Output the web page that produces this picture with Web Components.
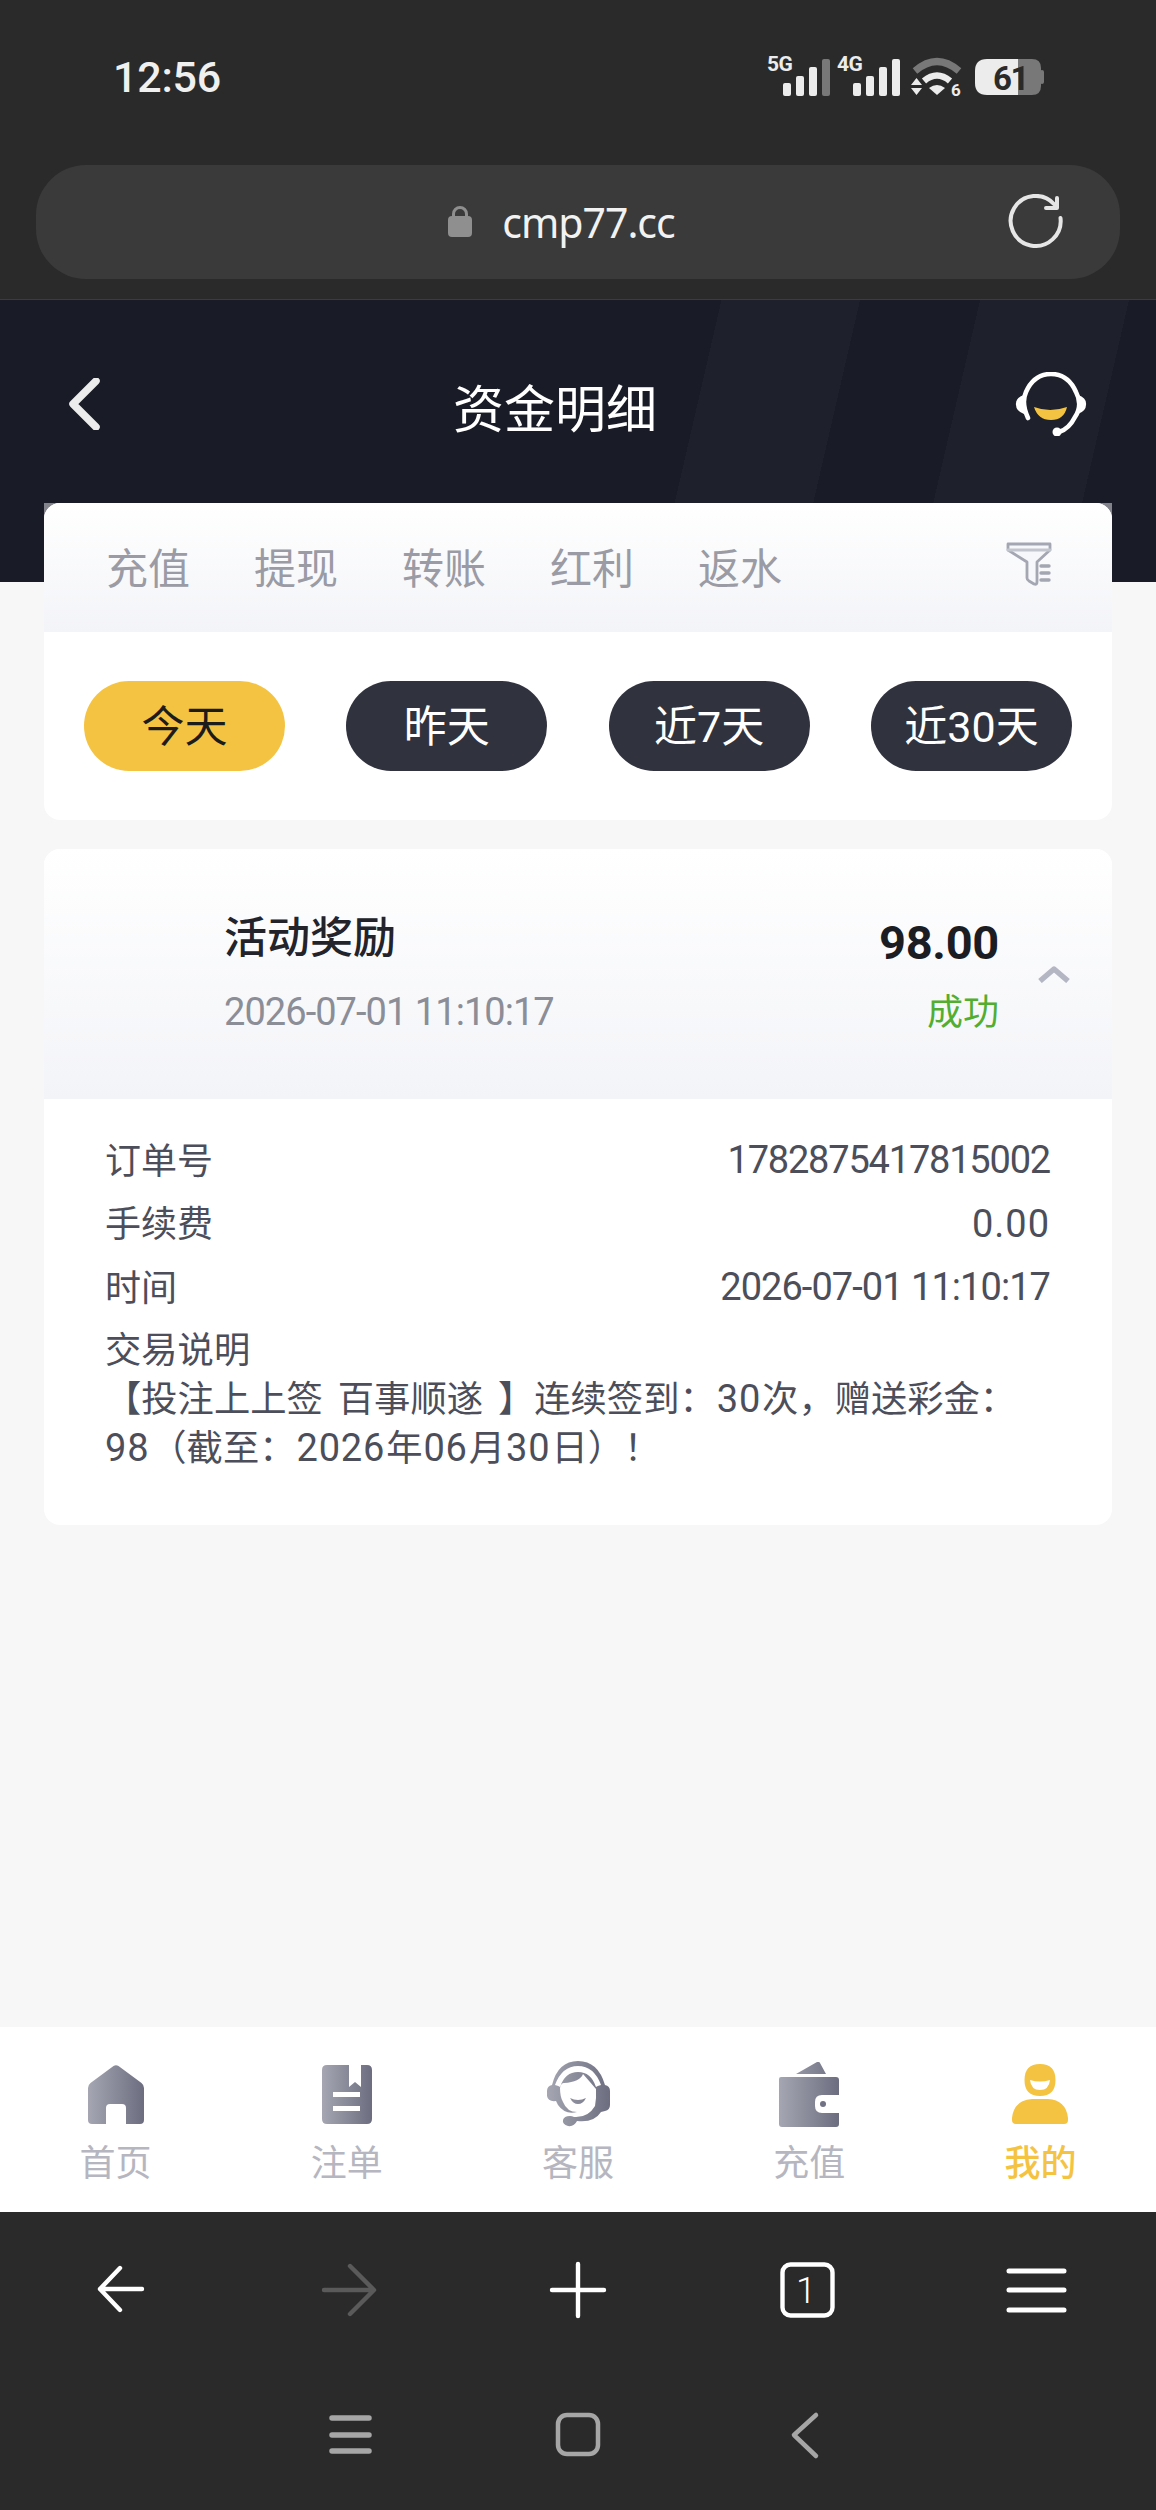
<!DOCTYPE html>
<html lang="zh-CN"><head><meta charset="utf-8"><title>资金明细</title>
<style>
html,body{margin:0;padding:0;background:#f7f7f7}
body{width:1156px;height:2510px;overflow:hidden;font-family:"Noto Sans CJK SC","Noto Sans",sans-serif}
</style></head>
<body>
<x-app></x-app>
<script>
function def(name, css, html){
  customElements.define(name, class extends HTMLElement{
    constructor(){super();const r=this.attachShadow({mode:'open'});r.innerHTML='<style>'+css+'</style>'+html;}
  });
}
const F='"Noto Sans CJK SC","Noto Sans",sans-serif';

def('x-status-bar',`
:host{display:flex;justify-content:space-between;align-items:flex-start;height:165px;box-sizing:border-box;padding:55px 108px 0 113px;color:#f0f0f0}
.t{font:500 43px/46px Roboto,${F};letter-spacing:-.2px;margin-top:-1px}
svg{display:block;margin-top:-15px}
text{font-family:Roboto,sans-serif;font-weight:700}
`,`<div class="t">12:56</div>
<svg width="284" height="70" viewBox="765 40 284 70">
 <g fill="#ececec">
  <text x="768" y="71" font-size="21" letter-spacing="-.6">5G</text>
  <rect x="784" y="83" width="8" height="13" rx="2"/><rect x="797" y="76" width="8" height="20" rx="2"/><rect x="810" y="67" width="8" height="29" rx="2"/>
  <rect x="823" y="59" width="8" height="37" rx="2" fill="#787878"/>
  <text x="838" y="71" font-size="21" letter-spacing="-.6">4G</text>
  <rect x="854" y="83" width="8" height="13" rx="2"/><rect x="867" y="76" width="8" height="20" rx="2"/><rect x="880" y="67" width="8" height="29" rx="2"/><rect x="893" y="59" width="8" height="37" rx="2"/>
  <path d="M916 71Q938 52 960 71" fill="none" stroke="#787878" stroke-width="7"/>
  <path d="M925 81Q938 70 951 81" fill="none" stroke="#ececec" stroke-width="6.500"/>
  <path d="M930 88Q938 82 946 88L938 95Z"/>
  <path d="M912 85l5.500-7 5.500 7zM912 88h11l-5.500 7z"/>
  <text x="952" y="96" font-size="17">6</text>
  <path d="M1019 59h14q9 0 9 9v18q0 9-9 9h-14z" fill="#787878"/><rect x="1041" y="70" width="4" height="14" rx="2" fill="#787878"/>
  <path d="M1019 59h-31q-12 0-12 12v12q0 12 12 12h31z"/>
  <text x="994" y="90" font-size="33" fill="#2a2a2a" letter-spacing="-1.500">61</text>
 </g></svg>`);

def('x-url-bar',`
:host{display:flex;align-items:center;justify-content:center;position:relative;height:114px;margin:0 36px;padding-right:33px;background:#3a3a3a;border-radius:50px;color:#f2f2f2}
.u{font:400 41px/50px "Noto Sans",sans-serif;letter-spacing:-1px;margin:0 0 0 30px}
.lock{display:block;margin:-2px 0 0 0}
.r{position:absolute;right:56px;top:29px}
`,`<svg class="lock" width="24" height="32" viewBox="0 0 24 32"><path d="M5.500 13V9a6.500 6.500 0 0113 0v4" fill="none" stroke="#8f8f8f" stroke-width="3"/><rect y="11" width="24" height="21" rx="4" fill="#8f8f8f"/></svg>
<div class="u">cmp77.cc</div>
<svg class="r" width="56" height="56" viewBox="0 0 56 56" fill="none" stroke="#e6e6e6" stroke-width="4" stroke-linecap="round" stroke-linejoin="round"><path d="M46.500 10.500A25 25 0 1052.500 24"/><path d="M38 14H49V4"/></svg>`);

def('x-browser-top',`
:host{display:block;height:300px;background:#2a2a2a;box-sizing:border-box;border-bottom:1px solid #3c3c3c}
`,`<x-status-bar></x-status-bar><x-url-bar></x-url-bar>`);

def('x-page-head',`
:host{display:flex;align-items:center;justify-content:space-between;height:203px;box-sizing:border-box;padding:4px 69px 0;color:#fff}
h1{margin:0 0 0 -6px;font:400 51px/72px ${F};padding-top:4px}
svg{display:block}
`,`<svg width="32" height="52" viewBox="0 0 32 52" fill="none"><path d="M27 3L4 26l23 23" stroke="#ececec" stroke-width="7.500" stroke-linecap="round" stroke-linejoin="round"/></svg>
<h1>资金明细</h1>
<svg width="72" height="64" viewBox="1016 377 72 64"><g fill="none" stroke="#fff" stroke-width="4.600" stroke-linecap="round"><path d="M1029 423Q1022 408 1027 397Q1035 379 1052 379Q1069 379 1077 397Q1084 410 1076 422Q1070 434 1060 437"/></g>
<path d="M1025 400q-9 3-8 10 0 6 8 9zM1079 400q9 3 8 10 0 6-8 9z" fill="#fff"/><circle cx="1058" cy="437" r="4.500" fill="#fff"/><path d="M1035 412q16 6 33 0q-3 13-16 13t-17-13z" fill="#f5c342"/></svg>`);

def('x-pill',`
:host{display:flex;align-items:center;justify-content:center;width:201px;height:90px;border-radius:45px;background:#30323e;color:#fff;font:400 43px/60px Roboto,${F}}
:host([active]){background:#f5c342;color:#1c1c1c}
span{margin-top:2px}
`,`<span><slot></slot></span>`);

def('x-filter-card',`
:host{display:block;margin:0 44px;background:linear-gradient(#83848b 0 16px,transparent 16px)}
.c{background:#fff;border-radius:16px;height:317px;overflow:hidden}
.h{height:129px;background:linear-gradient(#fff,#f3f4f8);display:flex;align-items:center;padding:0 60px 0 62px;gap:64px;color:#9a9ba4;font:400 42px/60px ${F}}
.h span{margin-top:-4px}
.h svg{margin:-7px 0 0 auto;display:block}
.p{display:flex;justify-content:space-between;padding:49px 40px 0}
`,`<div class="c"><div class="h"><span>充值</span><span>提现</span><span>转账</span><span>红利</span><span>返水</span>
<svg width="46" height="44" viewBox="0 0 46 44" fill="none" stroke="#a4a6b2" stroke-width="2.800" stroke-linejoin="round" stroke-linecap="round"><path d="M2 2h42v6L31 20v20q0 3-3 2l-5-3q-2-1-2-3V20L2 8z" fill="#f6f7fa"/><path d="M2 8h42" stroke="#c3c5ce"/><path d="M35 24h8M35 31h8M35 38h8" stroke-width="3.400"/></svg></div>
<div class="p"><x-pill active>今天</x-pill><x-pill>昨天</x-pill><x-pill>近7天</x-pill><x-pill>近30天</x-pill></div></div>`);

def('x-row',`
:host{display:flex;justify-content:space-between;height:63.500px;align-items:center;font:400 36px/50px ${F};color:#4c4e5a}
::slotted([slot=v]){margin-top:5px;font:38px/50px Roboto,sans-serif}
`,`<slot name="k"></slot><slot name="v"></slot>`);

def('x-record',`
:host{display:block;margin:29px 44px 0;background:#fff;border-radius:16px;overflow:hidden;height:676px}
.h{height:250px;box-sizing:border-box;background:linear-gradient(#fff,#f3f4f8);display:grid;grid-template-columns:1fr auto 72px;padding:0 41px 0 180px}
.n{font:500 43px/60px ${F};color:#23242b;margin-top:55px}
.d{font:400 38px/50px Roboto,sans-serif;letter-spacing:-.95px;color:#8b8d97;margin-top:23px}
.a{font:700 47px/60px Roboto,sans-serif;letter-spacing:-.3px;color:#1c1d22;text-align:right;margin-top:64px}
.s{font:400 36px/50px ${F};color:#52ae30;text-align:right;margin-top:11px}
svg{display:block;margin:116px 0 0 38px}
.b{padding:27px 62px 0 61px}
.m{font:400 36.300px/48px Roboto,${F};color:#4c4e5a;width:960px;padding-top:10px;word-spacing:6px}
.num{font-family:Roboto,sans-serif;font-size:38px;letter-spacing:.8px;margin:0 1px}
.f{margin-left:0}
`,`<div class="h"><div><div class="n">活动奖励</div><div class="d">2026-07-01 11:10:17</div></div>
<div><div class="a">98.00</div><div class="s">成功</div></div>
<svg width="34" height="18" viewBox="0 0 34 18" fill="none"><path d="M3 16L17 4l14 12" stroke="#b4b6c4" stroke-width="5.500" stroke-linejoin="round"/></svg></div>
<div class="b">
<x-row><span slot="k">订单号</span><span slot="v" style="letter-spacing:-1.2px">1782875417815002</span></x-row>
<x-row><span slot="k">手续费</span><span slot="v" style="letter-spacing:1px">0.00</span></x-row>
<x-row><span slot="k">时间</span><span slot="v" style="letter-spacing:-.95px">2026-07-01 11:10:17</span></x-row>
<div class="m">交易说明<br>&#x3010;投注上上签 百事顺遂 &#x3011;连续签到&#xFF1A;<span class="num">30</span>次&#xFF0C;赠送彩金&#xFF1A;<br><span class="num f">98</span>&#xFF08;截至&#xFF1A;<span class="num">2026</span>年<span class="num">06</span>月<span class="num">30</span>日&#xFF09;&#xFF01;</div>
</div>`);

const G=(id)=>`<defs><linearGradient id="${id}"><stop offset="0" stop-color="#a5a6b2"/><stop offset="1" stop-color="#6c6e80"/></linearGradient></defs>`;
def('x-tab',`
:host{display:flex;flex-direction:column;align-items:center;color:#b5b6c0;font:400 36px/50px ${F}}
:host([active]){color:#f5c342;font-weight:500}
.i{height:70px;margin-top:32px;display:flex;align-items:center;justify-content:center}
.l{margin-top:6px}
`,`<div class="i"><slot name="i"></slot></div><div class="l"><slot></slot></div>`);

def('x-tabbar',`
:host{display:grid;grid-template-columns:repeat(5,1fr);height:185px;background:#fff}
svg{display:block}
`,`
<x-tab><svg slot="i" width="56" height="59" viewBox="0 0 56 59">${G('g1')}<path fill="url(#g1)" d="M25.500 1q2.500-1.600 5 0l23 17q2.500 2 2.500 5v32q0 4-4 4H38V43q0-4-4-4H22q-4 0-4 4v16H4q-4 0-4-4V23q0-3 2.500-5z"/></svg>首页</x-tab>
<x-tab><svg slot="i" width="50" height="59" viewBox="0 0 50 59">${G('g2')}<path fill="url(#g2)" d="M5 0h22v22l6-5 6 5V0h6q5 0 5 5v49q0 5-5 5H5q-5 0-5-5V5q0-5 5-5z"/><rect x="11" y="27" width="27" height="5" fill="#fff"/><rect x="11" y="41" width="27" height="5" fill="#fff"/></svg>注单</x-tab>
<x-tab><svg slot="i" width="64" height="66" viewBox="0 0 64 66">${G('g3')}<path fill="url(#g3)" d="M32 0Q52 0 59 24q5 1 5 6v14q0 5-5 6l-4 1Q48 62 31 60q-3 6-9 5-6-2-5-6t7-4q2 0 4 1 14 1 21-11l1-8V28q-6-7-13-15-3 8-19 9-3 0-4 5 0 9 3 14 4 10 14 10-12 3-19-7l-2-4q-8 1-9-5V30q0-5 5-6Q12 0 32 0zm0 5Q16 5 9 24q4 1 5 2 5-15 18-15t18 15q1-1 5-2Q48 5 32 5zM24 37q8 4 16 0-3 6-8 6t-8-6z"/></svg>客服</x-tab>
<x-tab><svg slot="i" width="60" height="65" viewBox="0 0 60 65">${G('g4')}<path fill="url(#g4)" d="M17 12L38 0q2-1 3 1l6 11zM2 15h55q3 0 3 3v15H43q-7 0-7 7v4q0 7 7 7h17v11q0 3-3 3H3q-3 0-3-3V17q0-2 2-2z"/><circle cx="44" cy="42" r="3" fill="#717384"/></svg>充值</x-tab>
<x-tab active><svg slot="i" width="56" height="61" viewBox="0 0 56 61"><path fill="#f5c342" fill-rule="evenodd" d="M28 0Q43.500 0 43.500 16 43.500 32 28 32 12.500 32 12.500 16 12.500 0 28 0zM18 16Q28 19 38 16 37 26 28 26 19 26 18 16zM20 35H36Q54 36 56 54v2q0 4-4 4H4q-4 0-4-4V54Q2 36 20 35z"/></svg>我的</x-tab>`);

def('x-browser-bottom',`
:host{display:block;height:298px;background:#2a2a2a}
svg{display:block}
text{font:300 36px Roboto,sans-serif}
`,`<svg width="1156" height="298" viewBox="0 2212 1156 298" fill="none" stroke-linecap="round" stroke-linejoin="round">
<g stroke="#fff" stroke-width="4.400"><path d="M120 2268L100 2289L120 2310M100 2289H142"/>
<path d="M552 2290H604M578 2264V2316"/>
<rect x="782.500" y="2264.500" width="50" height="51" rx="8"/></g>
<text x="806" y="2303" fill="#fff" text-anchor="middle" stroke="none">1</text>
<path d="M350 2266L374 2290L350 2314M324 2290H372" stroke="#5a5a5a" stroke-width="4.400"/>
<path d="M1009 2271H1064M1009 2290H1064M1009 2310H1064" stroke="#fff" stroke-width="5"/>
<path d="M332 2418H369M332 2435H369M332 2451H369" stroke="#a6a6a6" stroke-width="5.500"/>
<rect x="558" y="2415" width="40" height="39" rx="9" stroke="#a6a6a6" stroke-width="4.500"/>
<path d="M816 2415L794 2435L816 2456" stroke="#a6a6a6" stroke-width="4.500"/>
</svg>`);

def('x-app',`
:host{display:flex;flex-direction:column;height:2510px;background:#f7f7f7}
main{flex:1;background-image:
 linear-gradient(103deg,transparent 703px,#1e212b 703px,#1e212b 838px,transparent 838px,transparent 955px,#1e212b 955px,#1e212b 1100px,transparent 1100px),
 linear-gradient(#191c26,#191c26);
 background-size:1156px 282px;background-repeat:no-repeat}
.w{flex:1;display:flex;flex-direction:column}
`,`<x-browser-top></x-browser-top><div class="w"><main><x-page-head></x-page-head><x-filter-card></x-filter-card><x-record></x-record></main><x-tabbar></x-tabbar></div><x-browser-bottom></x-browser-bottom>`);
</script>
</body></html>
